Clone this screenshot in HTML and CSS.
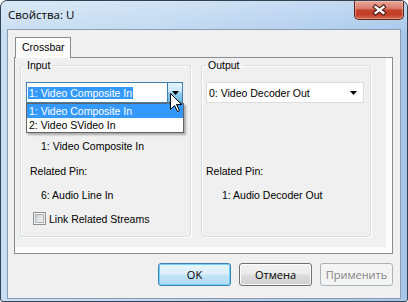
FILE: index.html
```html
<!DOCTYPE html>
<html>
<head>
<meta charset="utf-8">
<link rel="stylesheet" href="styles.css">
</head>
<body>
<div class="window">
  <div class="titlebar">
    <span class="title">Свойства: U</span>
    <div class="close">
      <svg width="15" height="12" viewBox="0 0 15 12"><path d="M3.5 3 L11.5 9 M11.5 3 L3.5 9" stroke="#4b1b14" stroke-width="4.4" stroke-linecap="square" fill="none"/><path d="M3.5 3 L11.5 9 M11.5 3 L3.5 9" stroke="#ffffff" stroke-width="2.2" stroke-linecap="square" fill="none"/></svg>
    </div>
  </div>
  <div class="client">
    <div class="tabs"><div class="tab">Crossbar</div></div>
    <div class="pane">
      <div class="page">
        <fieldset class="group group-in">
          <legend>Input</legend>
          <div class="combo combo-open">
            <span class="combo-sel">1: Video Composite In</span>
            <span class="combo-btn"><svg width="7" height="4" viewBox="0 0 7 4"><path d="M0 0 H7 L3.5 4 Z" fill="#000"/></svg></span>
            <div class="droplist">
              <div class="item item-hl">1: Video Composite In</div>
              <div class="item">2: Video SVideo In</div>
            </div>
          </div>
          <div class="value value-first">1: Video Composite In</div>
          <div class="label label-in">Related Pin:</div>
          <div class="value">6: Audio Line In</div>
          <label class="check"><span class="cb"><span class="cb-in"></span></span>Link Related Streams</label>
        </fieldset>
        <fieldset class="group group-out">
          <legend>Output</legend>
          <div class="combo combo-plain">
            <span class="combo-text">0: Video Decoder Out</span>
            <svg class="arrow" width="7" height="4" viewBox="0 0 7 4"><path d="M0 0 H7 L3.5 4 Z" fill="#000"/></svg>
          </div>
          <div class="label label-out">Related Pin:</div>
          <div class="value">1: Audio Decoder Out</div>
        </fieldset>
      </div>
    </div>
    <div class="buttons">
      <button class="btn btn-default">OK</button>
      <button class="btn">Отмена</button>
      <button class="btn btn-disabled">Применить</button>
    </div>
  </div>
  <svg class="cursor" width="13" height="20" viewBox="0 0 13 20"><path d="M0.5 0.5 L0.5 16.5 L4.5 12.5 L7.5 18.5 L9.5 17.5 L6.5 11.5 L11.5 11.5 Z" fill="#fff" stroke="#000" stroke-width="1" stroke-linejoin="miter"/></svg>
</div>
</body>
</html>
```
FILE: styles.css
```css
* { box-sizing: border-box; }
html, body { margin: 0; padding: 0; }
body {
  width: 408px; height: 302px; overflow: hidden;
  font-family: "Liberation Sans", Arial, sans-serif;
  font-size: 10.5px; color: #000; background: #fff;
}
.window {
  position: relative;
  width: 408px; height: 302px;
  border: 1px solid #34414e;
  border-radius: 7px 7px 3px 3px;
  background: linear-gradient(to right, #c9def2 0%, #bed7f0 40%, #b0cdee 75%, #a6c6ea 100%);
  display: flex; flex-direction: column;
  overflow: hidden;
}
.titlebar {
  height: 28px; flex: none;
  display: flex; align-items: flex-start;
  padding-left: 7px;
  background: linear-gradient(to bottom, rgba(255,255,255,0.3), rgba(255,255,255,0.08));
}
.title {
  margin-top: 7px;
  font-family: "Open Sans", "Liberation Sans", sans-serif;
  font-size: 11.5px; line-height: 14px; color: #000;
}
.close {
  margin-left: auto; margin-right: 3px;
  width: 50px; height: 19px;
  border: 1px solid #5e2418; border-top: none;
  border-radius: 0 0 5px 5px;
  background: linear-gradient(to bottom, #e9a597 0%, #d9806f 40%, #c5432c 52%, #c13d26 75%, #d66a52 100%);
  box-shadow: inset 0 0 0 1px rgba(255,220,210,0.4);
  display: flex; align-items: center; justify-content: center;
}
.client {
  flex: 1;
  margin: 0 6px 2px;
  border: 1px solid #8a9db3;
  background: #f0f0f0;
  padding: 7px 7px 0 6px;
  display: flex; flex-direction: column;
}
.tabs { height: 20px; display: flex; flex: none; }
.tab {
  position: relative; z-index: 1;
  margin-left: 1px;
  width: 56px; height: 21px;
  border: 1px solid #898c95; border-bottom: none;
  background: #fcfcfc;
  padding-left: 6px;
  line-height: 18px;
}
.pane {
  width: 379px; height: 197px; flex: none;
  border: 1px solid #898c95;
  background: #fcfcfc;
  padding: 0 6px 6px 0;
}
.page {
  height: 100%;
  background: #f0f0f0;
  display: flex; gap: 10px;
  padding: 1px 0 0 5px;
}
.group {
  margin: 0; padding: 0;
  height: 178px;
  border: 1px solid #d5dfe5;
  border-radius: 3px;
  box-shadow: inset 1px 1px 0 #fff, 1px 1px 0 #fff;
  min-width: 0;
}
.group-in { width: 171px; }
.group-out { width: 170px; }
legend {
  margin-left: 4px;
  padding: 0 2px;
  line-height: 12px;
}
.combo {
  position: relative;
  height: 21px;
  margin-top: 11px;
  display: flex; align-items: center;
  background: #fff;
}
.combo-open {
  margin-left: 5px; width: 157px;
  border: 1px solid #3c7fb1;
  padding-left: 1px;
}
.combo-sel {
  background: #3399ff; color: #fff;
  line-height: 12px; padding: 0 1px;
}
.combo-btn {
  margin-left: auto;
  width: 16px; height: 21px; margin-top: -1px; margin-bottom: -1px; margin-right: -1px;
  border: 1px solid #3c7fb1;
  border-radius: 0 2px 2px 0;
  background: linear-gradient(to bottom, #e5f4fc 0%, #c4e5f6 50%, #98d1ef 50%, #68b3db 100%);
  display: flex; align-items: center; justify-content: center;
}
.droplist {
  position: absolute; z-index: 2;
  left: -1px; top: 20px;
  width: 158px; height: 30px;
  border: 1px solid #646464;
  background: #fff;
  box-shadow: 2px 2px 2px rgba(0,0,0,0.3);
}
.item { height: 14px; line-height: 14px; padding-left: 2px; }
.item-hl { background: #3399ff; color: #fff; }
.combo-plain {
  margin-left: 4px; width: 158px;
  border: 1px solid #dcdcdc;
  padding: 0 6px 0 2px;
  justify-content: space-between;
}
.arrow { display: block; }
.value, .label { line-height: 13px; height: 13px; white-space: nowrap; }
.value { padding-left: 20px; margin-top: 11px; }
.value-first { margin-top: 37px; }
.label-in { padding-left: 9px; margin-top: 12px; }
.label-out { padding-left: 4px; margin-top: 62px; }
.check {
  display: flex; align-items: center;
  height: 13px; margin-top: 10px;
  padding-left: 12px;
}
.cb {
  width: 13px; height: 13px;
  border: 1px solid #8e8f8f;
  background: #f4f4f4;
  padding: 1px;
  margin-right: 3px;
}
.cb-in {
  display: block; width: 9px; height: 9px;
  border: 1px solid #aeb3b9;
  background: linear-gradient(135deg, #cdd1d6, #f4f5f6);
}
.buttons {
  display: flex; justify-content: flex-end; gap: 8px;
  margin-top: 9px;
}
.btn {
  width: 73px; height: 23px;
  border: 1px solid #707070;
  border-radius: 3px;
  background: linear-gradient(to bottom, #f2f2f2 0%, #ebebeb 48%, #dddddd 52%, #cfcfcf 100%);
  box-shadow: inset 0 0 0 1px #fbfbfb;
  font-family: "Open Sans", "Liberation Sans", sans-serif;
  font-size: 11px; color: #000;
  padding: 0;
}
.btn-default {
  border-color: #3c7fb1;
  background: linear-gradient(to bottom, #e9f5fc 0%, #dbeffb 48%, #c3e5f8 52%, #b0daf3 100%);
  box-shadow: inset 0 0 0 1px #6fd3f5;
}
.btn-disabled {
  border-color: #adb2b5;
  background: #f4f4f4;
  box-shadow: none;
  color: #838383;
}
.cursor { position: absolute; left: 169px; top: 92px; z-index: 5; }
```
